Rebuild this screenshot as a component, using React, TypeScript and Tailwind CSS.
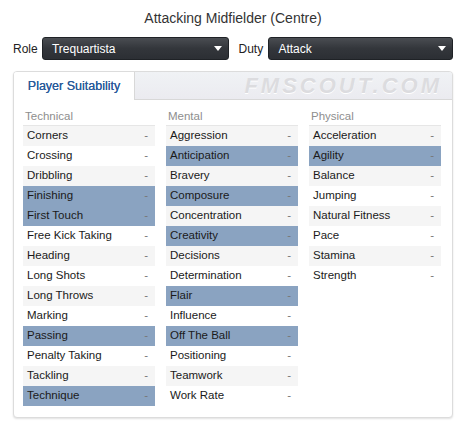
import { ReactNode } from "react";

type Attr = { name: string; key?: boolean };

const technical: Attr[] = [
  { name: "Corners" },
  { name: "Crossing" },
  { name: "Dribbling" },
  { name: "Finishing", key: true },
  { name: "First Touch", key: true },
  { name: "Free Kick Taking" },
  { name: "Heading" },
  { name: "Long Shots" },
  { name: "Long Throws" },
  { name: "Marking" },
  { name: "Passing", key: true },
  { name: "Penalty Taking" },
  { name: "Tackling" },
  { name: "Technique", key: true },
];

const mental: Attr[] = [
  { name: "Aggression" },
  { name: "Anticipation", key: true },
  { name: "Bravery" },
  { name: "Composure", key: true },
  { name: "Concentration" },
  { name: "Creativity", key: true },
  { name: "Decisions" },
  { name: "Determination" },
  { name: "Flair", key: true },
  { name: "Influence" },
  { name: "Off The Ball", key: true },
  { name: "Positioning" },
  { name: "Teamwork" },
  { name: "Work Rate" },
];

const physical: Attr[] = [
  { name: "Acceleration" },
  { name: "Agility", key: true },
  { name: "Balance" },
  { name: "Jumping" },
  { name: "Natural Fitness" },
  { name: "Pace" },
  { name: "Stamina" },
  { name: "Strength" },
];

function Select({ value, className }: { value: string; className: string }) {
  return (
    <div
      className={`flex h-[23px] items-center justify-between rounded-[3px] border border-[#1f2226] bg-gradient-to-b from-[#4a4d52] via-[#33363b] to-[#2c2f34] pl-[9px] pr-[6px] text-[12px] text-white ${className}`}
    >
      <span>{value}</span>
      <svg width="8" height="5" viewBox="0 0 8 5">
        <path d="M0 0h8L4 5z" fill="#fff" />
      </svg>
    </div>
  );
}

function Column({ title, rows }: { title: string; rows: Attr[] }) {
  return (
    <div className="w-[132px]">
      <div className="h-[19px] border-b border-[#e6e6e6] pl-[2px] text-[11.5px] leading-[19px] text-[#8e8e8e]">
        {title}
      </div>
      {rows.map((r, i) => (
        <Row key={r.name} attr={r} odd={i % 2 === 0} />
      ))}
    </div>
  );
}

function Row({ attr, odd }: { attr: Attr; odd: boolean }): ReactNode {
  const bg = attr.key ? "bg-[#8aa3c1]" : odd ? "bg-[#f5f5f5]" : "bg-white";
  return (
    <div
      className={`flex h-[20px] items-center justify-between pl-[4px] pr-[7px] text-[11.5px] text-[#1a1a1a] ${bg}`}
    >
      <span>{attr.name}</span>
      <span className="text-[#777]">-</span>
    </div>
  );
}

export default function App() {
  return (
    <div className="h-[431px] w-[466px] bg-white font-['Liberation_Sans',Arial,sans-serif]">
      <div className="pt-[9px] text-center text-[14px] leading-[18px] text-[#333]">
        Attacking Midfielder (Centre)
      </div>
      <div className="mt-[10px] flex items-center px-[13px] text-[12px] text-[#222]">
        <span className="w-[29px]">Role</span>
        <Select value="Trequartista" className="w-[187px]" />
        <span className="ml-[10px] w-[30px]">Duty</span>
        <Select value="Attack" className="w-[185px]" />
      </div>
      <div className="mx-[13px] mt-[11px] h-[347px] w-[440px] overflow-hidden rounded-[4px] border border-[#dcdcdc] bg-white shadow-[0_1px_2px_rgba(0,0,0,0.12)]">
        <div className="flex h-[28px] border-b border-[#d8d8d8] bg-gradient-to-b from-[#f0f2f5] to-[#ebebf0]">
          <div className="-mb-px flex w-[121px] items-center justify-center border-r border-[#d8d8d8] bg-white text-[12.5px] text-[#2a5a9a] [text-shadow:0_0_0.3px_#2a5a9a]">
            Player Suitability
          </div>
          <div className="flex flex-1 items-center justify-end pr-[10px]">
            <span className="text-[22px] font-bold italic tracking-[3px] text-[#dcdcdf] [text-shadow:0_1px_0_#fff]">
              FMSCOUT.COM
            </span>
          </div>
        </div>
        <div className="flex gap-[11px] pl-[9px] pt-[7px]">
          <Column title="Technical" rows={technical} />
          <Column title="Mental" rows={mental} />
          <Column title="Physical" rows={physical} />
        </div>
      </div>
    </div>
  );
}
